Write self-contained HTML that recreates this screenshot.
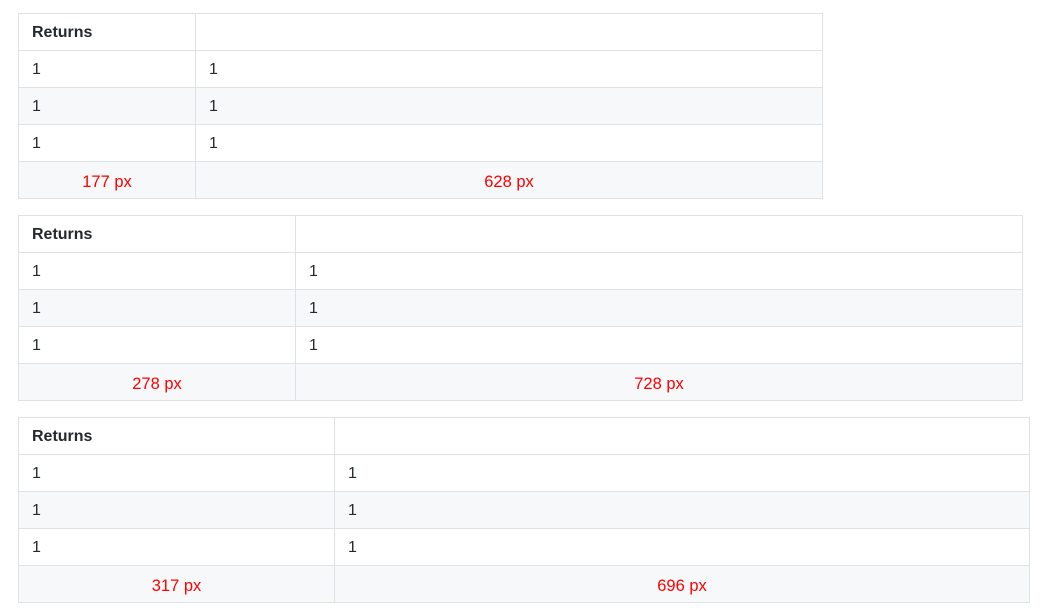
<!DOCTYPE html>
<html><head><style>
body{margin:0;background:#fff;font-family:"Liberation Sans",Helvetica,Arial,sans-serif;font-size:16px;color:#24292e;}
table{position:absolute;left:18px;border-collapse:collapse;table-layout:fixed;}
td,th{border:1px solid #dfe2e5;padding:2px 13px 0 13px;height:34px;text-align:left;white-space:nowrap;}
th{font-weight:bold;}
tr.g td{background:#f6f8fa;}
td.r{color:#f00;text-align:center;padding-top:5px;height:31px;font-size:16.5px;}
</style></head><body>
<table style="top:13px;width:804px">
<colgroup><col style="width:177px"><col style="width:627px"></colgroup>
<tr><th>Returns</th><th></th></tr>
<tr><td>1</td><td>1</td></tr>
<tr class="g"><td>1</td><td>1</td></tr>
<tr><td>1</td><td>1</td></tr>
<tr class="g"><td class="r">177 px</td><td class="r">628 px</td></tr>
</table>
<table style="top:215px;width:1004px">
<colgroup><col style="width:277px"><col style="width:727px"></colgroup>
<tr><th>Returns</th><th></th></tr>
<tr><td>1</td><td>1</td></tr>
<tr class="g"><td>1</td><td>1</td></tr>
<tr><td>1</td><td>1</td></tr>
<tr class="g"><td class="r">278 px</td><td class="r">728 px</td></tr>
</table>
<table style="top:417px;width:1011px">
<colgroup><col style="width:316px"><col style="width:695px"></colgroup>
<tr><th>Returns</th><th></th></tr>
<tr><td>1</td><td>1</td></tr>
<tr class="g"><td>1</td><td>1</td></tr>
<tr><td>1</td><td>1</td></tr>
<tr class="g"><td class="r">317 px</td><td class="r">696 px</td></tr>
</table>
</body></html>
